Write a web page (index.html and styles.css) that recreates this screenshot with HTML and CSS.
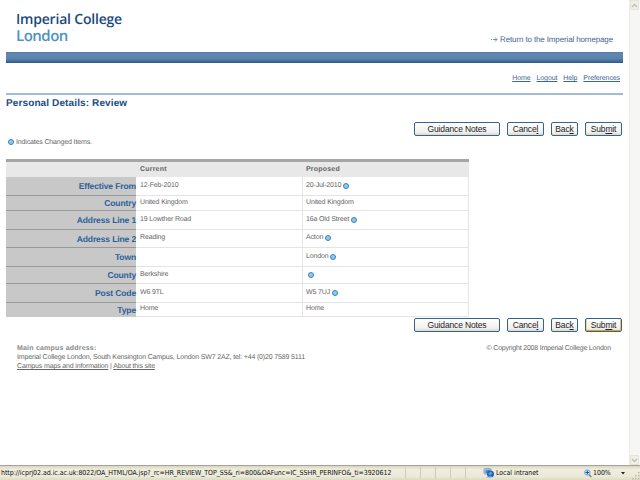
FILE: index.html
```
<!DOCTYPE html>
<html lang="en">
<head>
    <meta charset="UTF-8">
    <title>Personal Details: Review</title>
    <link rel="stylesheet" href="styles.css">
</head>
<body>
    <div class="viewport">
        <div class="page">
            <header>
                <div class="logo">
                    <div class="logo-top">Imperial College</div>
                    <div class="logo-bottom">London</div>
                </div>
                <a class="return" href="#"><svg width="7" height="5" viewBox="0 0 7 5"><path d="M0 2.5h1M2 2.500h4M4 0.5l2 2l-2 2" fill="none" stroke="#6f8fb5"/></svg><span>Return to the Imperial homepage</span></a>
            </header>
            <div class="bar"></div>
            <nav>
                <a href="#">Home</a>
                <a href="#">Logout</a>
                <a href="#">Help</a>
                <a href="#">Preferences</a>
            </nav>
            <h1><span>Personal Details: Review</span></h1>

            <div class="buttons">
                <button class="guidance"><span>Guidance Notes</span></button>
                <button class="cancel"><span>Cance<u>l</u></span></button>
                <button class="back"><span>Bac<u>k</u></span></button>
                <button class="submit"><span>Sub<u>m</u>it</span></button>
            </div>
            <div class="note"><i class="dot"></i><span>Indicates Changed Items.</span></div>

            <div class="details">
                <div class="row head"><div></div><div><span>Current</span></div><div><span>Proposed</span></div></div>
                <div class="row h19"><b><span>Effective From</span></b><div><span>12-Feb-2010</span></div><div><span>20-Jul-2010</span><i class="dot"></i></div></div>
                <div class="row h15"><b><span>Country</span></b><div><span>United Kingdom</span></div><div><span>United Kingdom</span></div></div>
                <div class="row h19"><b><span>Address Line 1</span></b><div><span>19 Lowther Road</span></div><div><span>16a Old Street</span><i class="dot"></i></div></div>
                <div class="row h18"><b><span>Address Line 2</span></b><div><span>Reading</span></div><div><span>Acton</span><i class="dot"></i></div></div>
                <div class="row h19"><b><span>Town</span></b><div></div><div><span>London</span><i class="dot"></i></div></div>
                <div class="row h17"><b><span>County</span></b><div><span>Berkshire</span></div><div class="blank"><i class="dot"></i></div></div>
                <div class="row h19"><b><span>Post Code</span></b><div><span>W6 9TL</span></div><div><span>W5 7UJ</span><i class="dot"></i></div></div>
                <div class="row h14"><b><span>Type</span></b><div><span>Home</span></div><div><span>Home</span></div></div>
            </div>

            <div class="buttons lower">
                <button class="guidance"><span>Guidance Notes</span></button>
                <button class="cancel"><span>Cance<u>l</u></span></button>
                <button class="back"><span>Bac<u>k</u></span></button>
                <button class="submit active"><span>Sub<u>m</u>it</span></button>
            </div>
            <footer>
                <div class="address">
                    <strong>Main campus address:</strong>
                    <div class="tel">Imperial College London, South Kensington Campus, London SW7 2AZ, tel: +44 (0)20 7589 5111</div>
                    <div class="maps"><a href="#">Campus maps and information</a> | <a href="#">About this site</a></div>
                </div>
                <div class="copyright">© Copyright 2008 Imperial College London</div>
            </footer>
        </div>
        <div class="scrollbar">
            <div class="arrow"><svg width="7" height="5" viewBox="0 0 7 5"><path d="M1 4l2.500-2.500l2.500 2.500" fill="none" stroke="#c2c0b4" stroke-width="1.500"/></svg></div>
            <div class="arrow"><svg width="7" height="5" viewBox="0 0 7 5"><path d="M1 1l2.500 2.500l2.500-2.500" fill="none" stroke="#c2c0b4" stroke-width="1.500"/></svg></div>
        </div>
    </div>
    <div class="status">
        <div class="url">http://icprj02.ad.ic.ac.uk:8022/OA_HTML/OA.jsp?_rc=HR_REVIEW_TOP_SS&amp;_ri=800&amp;OAFunc=IC_SSHR_PERINFO&amp;_ti=3920612</div>
        <div class="pane"></div>
        <div class="pane"></div>
        <div class="pane"></div>
        <div class="pane"></div>
        <div class="pane"></div>
        <div class="pane last"></div>
        <div class="zone">
            <svg width="12" height="11" viewBox="0 0 12 11"><rect x="1" y="0.500" width="7" height="5.500" rx="1" fill="#9fc3ea" stroke="#8fa9cc"/><path d="M2.500 2.500l4-1v3.500h-4z" fill="#4d84d4"/><circle cx="7.500" cy="6" r="3.500" fill="#1f5fc0"/><path d="M5 5.500l3-2l1.500 2l-2.500 2z" fill="#58b0a0"/><path d="M3 8.500h6v1.500h-5z" fill="#b5bfce"/></svg>
            <span>Local intranet</span>
        </div>
        <div class="zoom">
            <svg width="8" height="9" viewBox="0 0 8 9"><path d="M5 5.500l2.300 2.500" stroke="#8c7f72" stroke-width="1.500"/><circle cx="3.300" cy="3.500" r="2.700" fill="#cfe5fa" stroke="#6aa5e2"/><path d="M1.500 3.500h3.600M3.300 1.700v3.600" stroke="#1550b0"/></svg>
            <span>100%</span>
            <svg class="drop" width="4" height="3" viewBox="0 0 4 3"><path d="M0 0h4l-2 2.500z" fill="#222"/></svg>
        </div>
        <svg class="grip" width="8" height="8" viewBox="0 0 8 8"><path d="M6 0h1.500v1.500H6zM3 3h1.500v1.500H3zM6 3h1.500v1.500H6zM0 6h1.500v1.500H0zM3 6h1.500v1.500H3zM6 6h1.500v1.500H6z" fill="#bbb7a0"/></svg>
    </div>
</body>
</html>
```
FILE: styles.css
```
* {
    box-sizing: border-box;
}

body {
    margin: 0;
    width: 640px;
    height: 480px;
    overflow: hidden;
    display: flex;
    flex-direction: column;
    background: #fff;
    font-family: "Liberation Sans", Arial, sans-serif;
    font-size: 7px;
    color: #666;
    white-space: nowrap;
    text-rendering: geometricPrecision;
}

.viewport {
    height: 465px;
    display: flex;
}

.page {
    width: 629px;
    padding: 0 6px;
}

header {
    height: 52px;
    padding: 12px 10px 0;
    display: flex;
    justify-content: space-between;
}

.logo {
    font-family: "Open Sans", sans-serif;
    font-size: 14px;
    line-height: 16px;
}

.logo-top {
    font-weight: 600;
    color: #1c4a7c;
    letter-spacing: -0.2px;
}

.logo-bottom {
    font-size: 15px;
    font-weight: 600;
    color: #4e94c1;
    letter-spacing: -0.5px;
}

.return {
    margin-top: 22px;
    height: 10px;
    display: flex;
    align-items: center;
    gap: 2px;
    font-size: 8px;
    letter-spacing: -0.13px;
    color: #3f6596;
    text-decoration: none;
}

.bar {
    height: 11px;
    background: linear-gradient(#567fa9, #6488b0 25%, #5a82ab 60%, #3e6996 88%, #295482);
}

nav {
    height: 30px;
    padding: 11px 3px 0;
    display: flex;
    justify-content: flex-end;
    gap: 6px;
    line-height: 10px;
    letter-spacing: -0.1px;
}

nav a {
    color: #3a6798;
}

h1 {
    margin: 0;
    height: 29px;
    border-top: 2px solid #a4bbd5;
    font-size: 10px;
    line-height: 17px;
    letter-spacing: 0.12px;
    color: #1b4c85;
}

.buttons {
    height: 14px;
    display: flex;
    justify-content: flex-end;
    gap: 7px;
    padding-right: 1px;
}

button {
    height: 14px;
    padding: 0;
    border: 1px solid #33638f;
    border-radius: 2px;
    background: linear-gradient(#fff, #f2f1ec 75%, #dcd8ce);
    font-family: inherit;
    font-size: 8.5px;
    line-height: 12px;
    letter-spacing: -0.15px;
    color: #222;
}

.guidance {
    width: 86px;
}

.cancel {
    width: 37px;
}

.back {
    width: 27px;
}

.submit {
    width: 37px;
}

.active {
    box-shadow: inset 0 -1px #f0a018, inset 1px 0 #f5d28c, inset -1px 0 #f5bc58;
}

.note {
    height: 23px;
    padding: 2px 2px 0 2px;
    display: flex;
    align-items: flex-start;
    gap: 2px;
    line-height: 10px;
    letter-spacing: -0.15px;
}

.note .dot {
    margin-top: 1px;
}

.dot {
    width: 6px;
    height: 6px;
    flex: none;
    border: 1px solid #3585b8;
    border-radius: 50%;
    background: #92c7f4;
}

.details {
    width: 463px;
    border-top: 3px solid #a6a6a6;
}

.row {
    display: grid;
    grid-template-columns: 130px 166px 167px;
    line-height: 10px;
    letter-spacing: -0.15px;
}

.row > div {
    display: flex;
    align-items: center;
    gap: 2px;
    padding: 0 0 1px 4px;
    border-bottom: 1px solid #e4e4e4;
}

.row > div + div {
    padding-left: 3px;
    border-left: 1px solid #e4e4e4;
    border-right: 1px solid #e4e4e4;
}

.row > b + div {
    padding-left: 4px;
    border-right: 0;
    border-left: 0;
}

.row > .blank {
    padding-left: 5px;
}

.row b {
    display: flex;
    align-items: center;
    justify-content: flex-end;
    background: #c8c8c8;
    border-bottom: 1px solid #999;
    font-size: 8.5px;
    letter-spacing: -0.12px;
    color: #2c5f98;
}

.row:last-child b {
    border-bottom: 0;
}

.head {
    height: 15px;
    background: #e8e8e8;
    font-weight: bold;
    letter-spacing: 0.2px;
}

.row.head > div {
    padding-top: 2px;
    padding-bottom: 0;
    border-color: transparent;
}

.h14 { height: 14px; }
.h15 { height: 15px; }
.h17 { height: 17px; }
.h18 { height: 18px; }
.h19 { height: 19px; }

.lower {
    margin-top: 1px;
}

footer {
    display: flex;
    justify-content: space-between;
    padding: 12px 12px 0 11px;
    line-height: 9px;
    letter-spacing: -0.15px;
}

footer strong {
    display: block;
    letter-spacing: 0.2px;
    color: #8a8a8a;
}

footer a {
    color: #666;
}

.copyright {
    letter-spacing: -0.2px;
}

.scrollbar {
    width: 11px;
    background: #f6f6f4;
    border-left: 1px solid #ececea;
    display: flex;
    flex-direction: column;
    justify-content: space-between;
}

.arrow {
    width: 9px;
    height: 10px;
    display: flex;
    align-items: center;
    justify-content: center;
    background: #f0efe9;
    border: 1px solid #e6e4dc;
}

.status {
    height: 15px;
    display: flex;
    align-items: center;
    border-top: 1px solid #a5a496;
    background: linear-gradient(#d8d5c0, #efedde 25%, #ebe9d8 75%, #dedbc4);
    font-family: "DejaVu Sans Condensed", "DejaVu Sans", sans-serif;
    font-stretch: condensed;
    font-size: 7px;
    letter-spacing: -0.06px;
    color: #111;
}

.url {
    width: 391px;
    padding-left: 1px;
}

.pane {
    width: 15px;
    height: 12px;
    border-right: 1px solid #cfccb8;
}

.last {
    width: 17px;
    border: 0;
}

.zone {
    width: 95px;
    display: flex;
    align-items: center;
    gap: 1px;
}

.zoom {
    width: 47px;
    display: flex;
    align-items: center;
    gap: 1px;
    margin-left: 6px;
}

.drop {
    margin-left: 9px;
}

.grip {
    margin-left: auto;
    align-self: flex-end;
}
```
